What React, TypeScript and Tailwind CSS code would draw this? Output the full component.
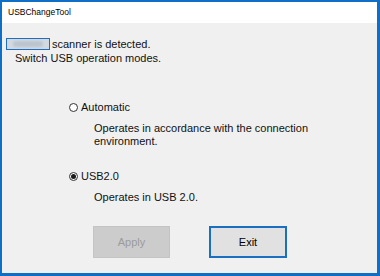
const Radio = ({ checked }: { checked?: boolean }) => (
    <span className="w-[9px] h-[9px] rounded-full border border-[#333333] bg-white flex items-center justify-center">
        {checked && <span className="w-[5px] h-[5px] rounded-full bg-[#1a1a1a]" />}
    </span>
);

const App = () => {
    return (
        <div
            className="w-[380px] h-[276px] bg-[#f0f0f0] border-[#0f6fc6] border-t-2 border-l-2 border-r-[3px] border-b-[3px] flex flex-col text-[#111111]"
            style={{ fontFamily: '"Liberation Sans", Arial, sans-serif' }}
        >
            <div className="h-[21px] bg-white flex items-center pl-[6px] text-[8.5px] text-black">
                USBChangeTool
            </div>
            <div className="flex flex-col text-[11px] leading-[14px] pt-[14px]">
                <div className="flex items-center pl-[4px]">
                    <span className="w-[44px] h-[12px] border-[1.5px] border-[#1e6ec4] bg-[#d3d9e0] mr-[2px] flex items-center justify-center">
                        <span className="w-[30px] h-[6px] rounded-full bg-[#bcc5cf] blur-[1px]" />
                    </span>
                    <span>scanner is detected.</span>
                </div>
                <div className="pl-[13px]">Switch USB operation modes.</div>

                <div className="pl-[67px] mt-[35px] flex flex-col">
                    <div className="flex items-center gap-[3px]">
                        <Radio />
                        <span>Automatic</span>
                    </div>
                    <div className="pl-[25px] mt-[8px] leading-[13px]">
                        Operates in accordance with the connection
                        <br />
                        environment.
                    </div>
                    <div className="flex items-center gap-[3px] mt-[21px]">
                        <Radio checked />
                        <span>USB2.0</span>
                    </div>
                    <div className="pl-[25px] mt-[7px]">Operates in USB 2.0.</div>
                </div>

                <div className="flex pl-[91px] gap-[39px] mt-[22px]">
                    <button className="w-[77px] h-[32px] bg-[#cccccc] border border-[#c4c4c4] text-[#9b9b9b] text-[11px]">
                        Apply
                    </button>
                    <button className="w-[78px] h-[32px] bg-[#e1e1e1] border-2 border-[#1a6fc0] text-black text-[11px]">
                        Exit
                    </button>
                </div>
            </div>
        </div>
    );
};

export default App;
